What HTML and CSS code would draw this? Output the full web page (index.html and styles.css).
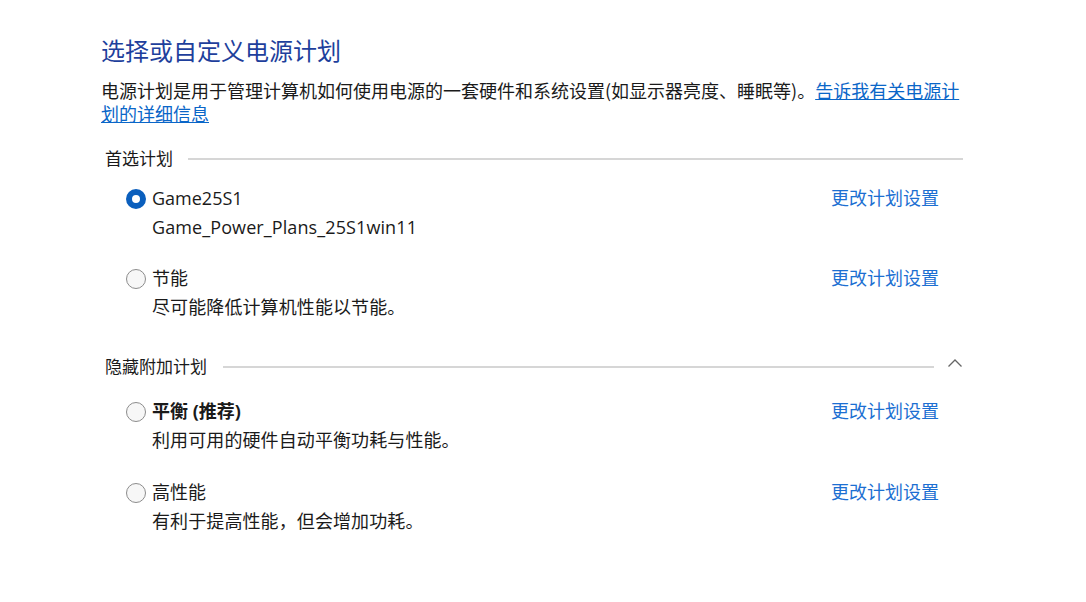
FILE: index.html
```html
<!DOCTYPE html>
<html lang="zh-CN">
<head>
    <meta charset="UTF-8">
    <title>电源选项</title>
    <link rel="stylesheet" href="styles.css">
</head>
<body>
    <main class="page">
        <h1 class="title">选择或自定义电源计划</h1>
        <p class="intro">电源计划是用于管理计算机如何使用电源的一套硬件和系统设置(如显示器亮度、睡眠等)。<a href="#" class="link">告诉我有关电源计划的详细信息</a></p>

        <section class="group">
            <div class="group-head">
                <span class="group-name">首选计划</span>
                <span class="rule"></span>
            </div>

            <div class="plan">
                <span class="radio checked"></span>
                <div class="plan-text">
                    <div class="plan-name">Game25S1</div>
                    <div class="plan-desc">Game_Power_Plans_25S1win11</div>
                </div>
                <a href="#" class="plan-link">更改计划设置</a>
            </div>

            <div class="plan">
                <span class="radio"></span>
                <div class="plan-text">
                    <div class="plan-name">节能</div>
                    <div class="plan-desc">尽可能降低计算机性能以节能。</div>
                </div>
                <a href="#" class="plan-link">更改计划设置</a>
            </div>
        </section>

        <section class="group group-extra">
            <div class="group-head">
                <span class="group-name">隐藏附加计划</span>
                <span class="rule"></span>
                <svg class="chevron" width="16" height="10" viewBox="0 0 16 10">
                    <path d="M1.5 8.5 L8 2 L14.5 8.5" fill="none" stroke="#666" stroke-width="1.3"/>
                </svg>
            </div>

            <div class="plan">
                <span class="radio"></span>
                <div class="plan-text">
                    <div class="plan-name bold">平衡 (推荐)</div>
                    <div class="plan-desc">利用可用的硬件自动平衡功耗与性能。</div>
                </div>
                <a href="#" class="plan-link">更改计划设置</a>
            </div>

            <div class="plan">
                <span class="radio"></span>
                <div class="plan-text">
                    <div class="plan-name">高性能</div>
                    <div class="plan-desc">有利于提高性能，但会增加功耗。</div>
                </div>
                <a href="#" class="plan-link">更改计划设置</a>
            </div>
        </section>
    </main>
</body>
</html>
```

FILE: styles.css
```css
* {
    margin: 0;
    padding: 0;
    box-sizing: border-box;
}

body {
    font-family: "Open Sans", "Noto Sans CJK SC", sans-serif;
    color: #1a1a1a;
    background-color: #fff;
}

.page {
    width: 965px;
    padding: 35px 0 0 101px;
}

.title {
    font-size: 24px;
    font-weight: normal;
    line-height: 32px;
    color: #1e3f9c;
}

.intro {
    margin-top: 12px;
    font-size: 18px;
    line-height: 23px;
    font-family: "Noto Sans CJK SC", sans-serif;
}

.link {
    color: #0a66c8;
    text-decoration: underline;
}

.group {
    margin-top: 22px;
}

.group-extra {
    margin-top: 33px;
}

.group-head {
    display: flex;
    align-items: center;
    padding-left: 4px;
    padding-right: 2px;
    height: 24px;
}

.group-name {
    flex: none;
    white-space: nowrap;
    font-size: 17px;
    line-height: 24px;
}

.rule {
    flex: 1;
    height: 2px;
    margin-left: 15px;
    background-color: #d6d6d6;
}

.group-extra .rule {
    margin-left: 16px;
}

/* 折叠箭头略高于分隔线 */
.chevron {
    flex: none;
    margin-left: 13px;
    margin-bottom: 8px;
}

.plan {
    display: flex;
    align-items: flex-start;
    padding: 0 26px 0 25px;
    margin-top: 13px;
}

.plan + .plan {
    margin-top: 22px;
}

.group-extra .group-head + .plan {
    margin-top: 18px;
}

.group-extra .plan + .plan {
    margin-top: 23px;
}

.radio {
    width: 20px;
    height: 20px;
    margin-top: 5px;
    border: 1px solid #8c8c8c;
    border-radius: 50%;
    background-color: #f7f7f7;
    flex: none;
}

.radio.checked {
    border: 6px solid #0b5fbd;
    background-color: #fff;
}

.plan-text {
    flex: 1;
    margin-left: 6px;
    font-size: 18px;
    line-height: 29px;
}

.plan-desc {
    letter-spacing: 0.1px;
}

.bold {
    font-weight: bold;
}

.plan-link {
    font-size: 18px;
    line-height: 29px;
    color: #1c6fd2;
    text-decoration: none;
}
```
